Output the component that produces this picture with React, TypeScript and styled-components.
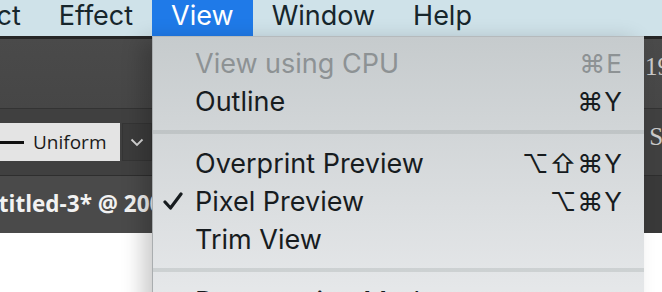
import React from "react";
import styled, { createGlobalStyle } from "styled-components";

const Global = createGlobalStyle`
  html, body { margin: 0; padding: 0; background: #ffffff; overflow: hidden; }
  #root { width: 662px; height: 292px; }
`;

const Screen = styled.div`
  position: relative;
  width: 662px;
  height: 292px;
  overflow: hidden;
  background: #ffffff;
  font-family: Inter, "Open Sans", "Liberation Sans", sans-serif;
`;

const MenuBar = styled.div`
  display: flex;
  height: 36px;
  background: #cfe2e9;
  margin-left: -82px;
`;

const MenuTitle = styled.div<{ $active?: boolean }>`
  display: flex;
  align-items: center;
  padding: 0 19px 5px;
  height: 36px;
  box-sizing: border-box;
  font-size: 27px;
  color: ${(p) => (p.$active ? "#ffffff" : "#17262c")};
  background: ${(p) => (p.$active ? "#1f7ae8" : "transparent")};
  white-space: nowrap;
`;

const ControlRow = styled.div`
  display: flex;
  align-items: center;
  justify-content: space-between;
  height: 69px;
  border-top: 3px solid #262626;
  border-bottom: 1px solid #333333;
  background: linear-gradient(#4a4a4a, #464646);
`;

const StrokeRow = styled.div`
  display: flex;
  align-items: flex-start;
  justify-content: space-between;
  height: 66px;
  background: #404040;
  border-bottom: 1px solid #2e2e2e;
`;

const StrokeGroup = styled.div`
  display: flex;
  gap: 2px;
  margin-top: 14px;
`;

const StrokeField = styled.div`
  display: flex;
  align-items: center;
  gap: 9px;
  width: 120px;
  height: 38px;
  background: #e4e4e4;
  font-family: "Open Sans", "Noto Sans", sans-serif;
  font-size: 19px;
  color: #1a1a1a;
`;

const StrokeLine = styled.span`
  display: block;
  width: 24px;
  height: 3px;
  background: #111111;
`;

const DropButton = styled.div`
  display: flex;
  align-items: center;
  justify-content: center;
  width: 30px;
  height: 38px;
  background: #3c3c3c;
  border: 1px solid #353535;
  box-sizing: border-box;
`;

const SideText = styled.span<{ $top: number }>`
  font-family: "Liberation Serif", "DejaVu Serif", serif;
  font-size: 25px;
  color: #c9c9c9;
  margin-right: -8px;
  align-self: flex-start;
  margin-top: ${(p) => p.$top}px;
`;

const TabRow = styled.div`
  display: flex;
  height: 57px;
  background: #393939;
`;

const DocTab = styled.div`
  display: flex;
  align-items: center;
  width: 300px;
  padding-bottom: 2px;
  box-sizing: border-box;
  background: #4a4a4a;
  overflow: hidden;
`;

const DocTitle = styled.span`
  margin-left: -33px;
  font-family: "Open Sans", "Noto Sans", sans-serif;
  font-weight: 700;
  font-size: 22.5px;
  color: #f2f2f2;
  white-space: nowrap;
`;

const Menu = styled.div`
  position: absolute;
  left: 152px;
  top: 36px;
  width: 492px;
  height: 300px;
  padding-top: 7px;
  box-sizing: border-box;
  background: linear-gradient(#c6cbcd, #e6e8ea 260px);
  border-left: 1px solid #a9adaf;
  border-top: 1px solid #b5babc;
  box-shadow: -10px 4px 20px rgba(0, 0, 0, 0.2);
`;

const Item = styled.div<{ $disabled?: boolean }>`
  display: flex;
  align-items: center;
  height: 38px;
  padding: 0 21px 0 42px;
  position: relative;
  font-size: 27px;
  color: ${(p) => (p.$disabled ? "#8d9294" : "#171c1f")};
`;

const Label = styled.span`
  flex: 1;
  white-space: nowrap;
`;

const Shortcut = styled.span`
  font-family: Inter, "DejaVu Sans", sans-serif;
  font-size: 26px;
  letter-spacing: 1px;
  white-space: nowrap;
`;

const Check = styled.span`
  position: absolute;
  left: 10px;
  top: 10px;
  display: flex;
`;

const Separator = styled.div`
  height: 24px;
  display: flex;
  align-items: center;
  &::after {
    content: "";
    display: block;
    width: 100%;
    height: 4px;
    background: rgba(120, 128, 132, 0.2);
  }
`;

function Chevron() {
  return (
    <svg width="14" height="9" viewBox="0 0 14 9">
      <path d="M1.5 1.5 L7 7 L12.5 1.5" fill="none" stroke="#d8d8d8" strokeWidth="1.8" />
    </svg>
  );
}

function CheckMark() {
  return (
    <svg width="20" height="18" viewBox="0 0 20 18">
      <path d="M2 10 L7.5 16 L18 2" fill="none" stroke="#171c1f" strokeWidth="3.2" strokeLinecap="round" strokeLinejoin="round" />
    </svg>
  );
}

export default function App() {
  return (
    <Screen>
      <Global />
      <MenuBar>
        <MenuTitle>Object</MenuTitle>
        <MenuTitle>Effect</MenuTitle>
        <MenuTitle $active>View</MenuTitle>
        <MenuTitle>Window</MenuTitle>
        <MenuTitle>Help</MenuTitle>
      </MenuBar>
      <ControlRow>
        <span />
        <SideText $top={14}>19</SideText>
      </ControlRow>
      <StrokeRow>
        <StrokeGroup>
          <StrokeField>
            <StrokeLine />
            Uniform
          </StrokeField>
          <DropButton>
            <Chevron />
          </DropButton>
        </StrokeGroup>
        <SideText $top={14}>St</SideText>
      </StrokeRow>
      <TabRow>
        <DocTab>
          <DocTitle>Untitled-3* @ 200% (RGB/Preview)</DocTitle>
        </DocTab>
      </TabRow>
      <Menu>
        <Item $disabled>
          <Label>View using CPU</Label>
          <Shortcut>⌘E</Shortcut>
        </Item>
        <Item>
          <Label>Outline</Label>
          <Shortcut>⌘Y</Shortcut>
        </Item>
        <Separator />
        <Item>
          <Label>Overprint Preview</Label>
          <Shortcut>⌥⇧⌘Y</Shortcut>
        </Item>
        <Item>
          <Check>
            <CheckMark />
          </Check>
          <Label>Pixel Preview</Label>
          <Shortcut>⌥⌘Y</Shortcut>
        </Item>
        <Item>
          <Label>Trim View</Label>
        </Item>
        <Separator />
        <Item>
          <Label>Presentation Mode</Label>
        </Item>
      </Menu>
    </Screen>
  );
}
